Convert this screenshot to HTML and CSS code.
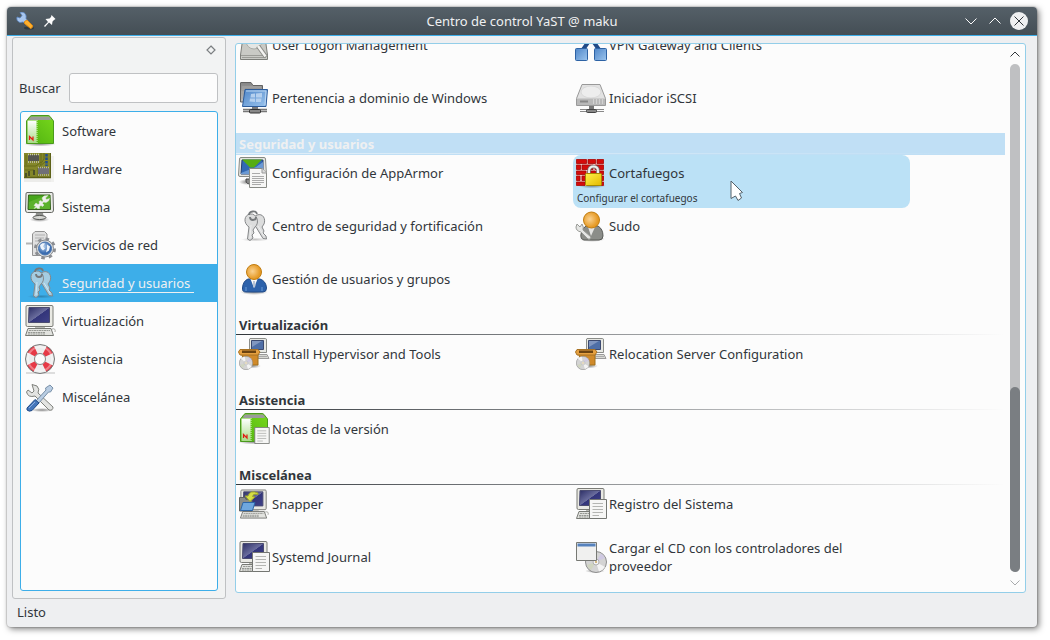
FILE: index.html
```html
<!DOCTYPE html>
<html lang="es">
<head>
<meta charset="utf-8">
<title>Centro de control YaST @ maku</title>
<link rel="stylesheet" href="styles.css">
</head>
<body>
<svg class="defs" aria-hidden="true">
  <defs>
    <linearGradient id="gGreen" x1="0" y1="1" x2="1" y2="0"><stop offset="0" stop-color="#4eb010"/><stop offset="1" stop-color="#78d81c"/></linearGradient>
    <linearGradient id="gPale" x1="0" y1="0" x2="0" y2="1"><stop offset="0" stop-color="#ffffff"/><stop offset="1" stop-color="#a9dc88"/></linearGradient>
    <linearGradient id="gScreen" x1="0" y1="0" x2="1" y2="1"><stop offset="0" stop-color="#2c2e66"/><stop offset=".5" stop-color="#6b6e9e"/><stop offset=".52" stop-color="#33357a"/><stop offset="1" stop-color="#404288"/></linearGradient>
    <linearGradient id="gBlue" x1="0" y1="0" x2="1" y2="1"><stop offset="0" stop-color="#4f86c8"/><stop offset="1" stop-color="#9cc5ee"/></linearGradient>
    <linearGradient id="gFolder" x1="0" y1="0" x2="0" y2="1"><stop offset="0" stop-color="#858585"/><stop offset="1" stop-color="#bebebe"/></linearGradient>
    <linearGradient id="gLock" x1="0" y1="0" x2="1" y2="1"><stop offset="0" stop-color="#fff34a"/><stop offset="1" stop-color="#e3b800"/></linearGradient>
    <radialGradient id="gHead" cx=".4" cy=".45"><stop offset="0" stop-color="#fad291"/><stop offset="1" stop-color="#e69a25"/></radialGradient>
    <radialGradient id="gGlobe" cx=".4" cy=".35"><stop offset="0" stop-color="#b9d2ee"/><stop offset="1" stop-color="#3a6cb0"/></radialGradient>
    <radialGradient id="gShade"><stop offset="0" stop-color="#000" stop-opacity=".45"/><stop offset="1" stop-color="#000" stop-opacity="0"/></radialGradient>

    <symbol id="software" viewBox="0 0 32 32">
      <ellipse cx="16" cy="29" rx="16" ry="2.500" fill="url(#gShade)"/>
      <path d="M2.500 6 6 1.500Q7 .5 8 .5H24Q25 .5 26 1.500L29.500 6V28.500H2.500Z" fill="url(#gGreen)" stroke="#4a9a1c"/>
      <path d="M4.500 4.500 7 1.500H25L27.500 4.500 25 5H7Z" fill="#9b9b9b"/>
      <path d="M3.500 5.500H12.500V28H3.500Z" fill="url(#gPale)"/>
      <path d="M13 5V28" stroke="#d7f2c2" stroke-dasharray="1 1"/>
      <path d="M5.500 25V21.500L9 25V21.500" fill="none" stroke="#e01b12" stroke-width="1.200"/>
    </symbol>
    <symbol id="hardware" viewBox="0 0 32 32">
      <path d="M0 24H30V29H0Z" fill="#ececea"/><path d="M27 3H30V29H27Z" fill="#f1f1ef"/>
      <path d="M0 0H27V25H0Z" fill="#84872a"/>
      <path d="M0 13H12L17 9V0M1 17H10M20 0V6L16 12M2 2V12M14 25V15L22 8" stroke="#666a18" fill="none"/>
      <path d="M4 2H15V8H4Z" fill="#555650"/><path d="M4 1.500H15M4 9H15" stroke="#c9c9b8" stroke-width="1.500" stroke-dasharray="1 1"/>
      <path d="M14 15H25V21H14Z" fill="#706f76"/><path d="M14 14.500H25M14 22H25" stroke="#b5b5a8" stroke-width="1.500" stroke-dasharray="1 1"/>
      <path d="M22.500 1V13" stroke="#1f4e94" stroke-width="2.500" stroke-dasharray="2.500 1"/>
      <path d="M5 18V23M2 20V24M10 17V22" stroke="#4c512a" stroke-width="2"/>
      <path d="M0 24.500H27" stroke="#5d6118" stroke-width="1.500"/><path d="M26.500 0V25" stroke="#5d6118"/>
    </symbol>
    <symbol id="sistema" viewBox="0 0 32 32">
      <ellipse cx="15.500" cy="28.500" rx="10" ry="2.500" fill="url(#gShade)"/>
      <path d="M12 22H19L20 27H11Z" fill="#8f918d"/><ellipse cx="15.500" cy="26.500" rx="6.500" ry="2" fill="#d6d7d3" stroke="#555753"/>
      <path d="M3 1.500H28Q29 1.500 29 3L29.500 19Q29.500 21.500 27.500 21.500H3.500Q1.500 21.500 1.500 19L2 3Q2 1.500 3 1.500Z" fill="#e9eae7" stroke="#666863"/>
      <path d="M4.500 4H26L26.500 18.500H4Z" fill="#46a51a" stroke="#36621d"/>
      <path d="M5 18V11L20 5V4.500H26V18Z" fill="#6fbd3d" opacity=".5"/>
      <path d="M10 17.500 12 15.500 10 14.500 12 12 14 13.500 15.500 12.500 15 10.500 17 9.500 18 11 19 9.500 18 7 20 5 24 4.500 21.500 7 22.500 8.500 25.500 7.500 24.500 10 22 11.500 19.500 11 18.500 12.500 20 14 18.500 15.500 17 14.500 15.500 15.500 15.500 17.500 13.500 17.500 12.500 16.500Z" fill="#eeeeec" stroke="#dfe8da" stroke-width=".500"/>
    </symbol>
    <symbol id="red" viewBox="0 0 32 32">
      <path d="M2 14.500H9" stroke="#b4b4b4" stroke-width="2"/>
      <path d="M8.500 5 11 2.500H20.500L23 5V26.500H8.500Z" fill="#e0e0e0" stroke="#929292"/>
      <path d="M11 6H21M11 9H20M11 12H15" stroke="#b0b0b0"/>
      <circle cx="21" cy="19.500" r="9.500" fill="none" stroke="#8c8e92" stroke-width="3" stroke-dasharray="3.500 4"/>
      <circle cx="21" cy="19.500" r="8.500" fill="#dcdddd" stroke="#85888d"/>
      <circle cx="21" cy="19.500" r="6.500" fill="url(#gGlobe)" stroke="#4a76b0"/>
      <path d="M16 16.500C18 13.500 20 14.500 21 14.500L19 17.500 21 19.500 19 21.500 17 19.500ZM23 15.500 26 17.500 25 21.500 22 23.500 23 19.500Z" fill="#eef4fb"/>
    </symbol>
    <symbol id="llaves" viewBox="0 0 32 32">
      <ellipse cx="17" cy="29.500" rx="14" ry="2" fill="url(#gShade)" opacity=".5"/>
      <g fill="currentColor" stroke="#858789">
        <path d="M19 5C25 3 28 9 26 14L24 17 26 21 25 23 28 26 28.500 29 25 28.500 18 17C14 13 14 7 19 5Z"/>
        <path d="M12 4C6 5 5 13 11 17L9.500 29 12 30.500 15 28 14 25 16 23 15 20 17 17C22 13 19 3 12 4Z"/>
      </g>
      <path d="M11 5C11 1 18 0 19 4M12 7A3 3 0 1 0 18 7" fill="none" stroke="#75797b" stroke-width="1.800"/>
      <path d="M13 15 12 28M20 16 26 26" stroke="#fff" opacity=".5"/>
    </symbol>
    <symbol id="pc" viewBox="0 0 32 32">
      <path d="M3 .5H28Q29 .5 29 2V20Q29 21.500 28 21.500H3.500Q2 21.500 2 20V2Q2 .5 3 .5Z" fill="#e9e9e3" stroke="#7b7c77"/>
      <path d="M5 2.500H25.500V17.500H4.500Z" fill="url(#gScreen)" stroke="#4a4b70"/>
      <path d="M11 22H21V24H11Z" fill="#b8b9b3"/>
      <path d="M4 23.500H27L29.500 30.500H1.500Z" fill="#e2e3df" stroke="#777974"/>
      <path d="M5 25.500H26M4 27.500H21M4 29H21" stroke="#979994" stroke-dasharray="2 .5"/>
      <path d="M28 24Q32 23 31 27" fill="none" stroke="#a5a6a1"/>
    </symbol>
    <symbol id="asistencia" viewBox="0 0 32 32">
      <path d="M2 29H31V31H2Z" fill="#ddd"/>
      <circle cx="16" cy="16" r="10" fill="none" stroke="#ededed" stroke-width="9"/>
      <circle cx="16" cy="16" r="10" fill="none" stroke="#e63946" stroke-width="9" stroke-dasharray="6.500 9.208" stroke-dashoffset="-4.600"/>
      <circle cx="16" cy="16" r="12" fill="none" stroke="#fff" stroke-width="2" opacity=".35"/>
      <circle cx="16" cy="16" r="14.500" fill="none" stroke="#777"/>
      <circle cx="16" cy="16" r="5.500" fill="#fcfcfc" stroke="#868686"/>
    </symbol>
    <symbol id="herramientas" viewBox="0 0 32 32">
      <ellipse cx="18" cy="29" rx="12" ry="2" fill="url(#gShade)"/>
      <path d="M8 3.500 13 5Q16 8 14 12L29 26Q29 30 25 29L11 15Q4 17 2.500 11L4 9 8 12 10 10Z" fill="#e3e4e2" stroke="#7f817c"/>
      <path d="M11 21 22 9 21.500 7 26 4 29 7 26.500 11 24.500 11 14 23Z" fill="#b9cde3" stroke="#7990a8"/>
      <path d="M3 27 11 18.500 15 22 8 29.500Q5 31 3 29Z" fill="#4677bb" stroke="#204a87"/><path d="M5 27 11 21" stroke="#8fb0df"/>
    </symbol>
    <symbol id="doc" viewBox="0 0 18 20">
      <path d="M.5 .5H17.500V19.500H.5Z" fill="#f6f6f5" stroke="#747672"/>
      <path d="M3.500 4.500H14M3.500 7.500H14M3.500 10.500H14M3.500 13.500H14M3.500 16.500H10" stroke="#b4b5b2"/>
    </symbol>
    <symbol id="disco" viewBox="0 0 22 22">
      <circle cx="11" cy="11" r="10.500" fill="#d4d4d4" stroke="#8e8e8e"/>
      <path d="M11 11 3 4A10 10 0 0 1 9 1ZM11 11 20 16A10 10 0 0 1 14 20.500Z" fill="#f4f4f4"/>
      <path d="M11 11 16 2.500A10 10 0 0 1 20 7Z" fill="#cfc9e2"/><path d="M11 11 2 14A10 10 0 0 0 6 19Z" fill="#d0d5c0"/>
      <circle cx="11" cy="11" r="3" fill="#f4f4f4" stroke="#b0b0b0"/><circle cx="11" cy="11" r="1" fill="#c7a45c"/>
    </symbol>
    <symbol id="logon" viewBox="0 0 32 32">
      <path d="M5 8H27L29.500 26V30.500H2.500V26Z" fill="#c9cac5" stroke="#7c7e79"/>
      <path d="M3 26.500H29M4 28.500H28" stroke="#9b9c97"/>
      <circle cx="16" cy="12" r="8" fill="#e4e6e4" stroke="#aaaca8"/><path d="M20 17 28 28" stroke="#8a8c87" stroke-width="4.500"/><path d="M20 17 27.500 27.500" stroke="#f3f3f1" stroke-width="2.500"/>
    </symbol>
    <symbol id="dominio" viewBox="0 0 32 32">
      <path d="M2.500 1Q2.500 .5 3 .5H13L15 3.500H24.500V20H2.500Z" fill="url(#gFolder)" stroke="#626262"/><path d="M4 5H23M4 7H7M3 10H7M3 13H6M3 16H6" stroke="#a9a9a9"/>
      <path d="M7 7.500H29.500L28 24.500H4.500Z" fill="url(#gBlue)" stroke="#2c5c9c"/>
      <path d="M8 9H28L27 23" fill="none" stroke="#bad5f1"/>
      <path d="M13 12 17 11.500V15.500H12.500ZM18 11.500 24 11V15.500H18ZM12 16.500H17V20L11.500 19.500ZM18 16.500H23.500L23 20H18Z" fill="#b5d0ee"/>
      <path d="M5 27.500H29M5 29.500H29" stroke="#777" stroke-width="1.500"/><path d="M14 25H20V28H14Z" fill="#777"/><rect x="11.500" y="27.500" width="11" height="3.500" rx="1" fill="#888" stroke="#333"/>
    </symbol>
    <symbol id="vpn" viewBox="0 0 32 32">
      <path d="M7 22 14 12H18L25 22" fill="none" stroke="#204a87" stroke-width="4"/>
      <rect x=".5" y="19.500" width="12" height="12" rx="1" fill="url(#gBlue)" stroke="#2d62a4"/><rect x="19.500" y="19.500" width="12" height="12" rx="1" fill="url(#gBlue)" stroke="#2d62a4"/>
    </symbol>
    <symbol id="iscsi" viewBox="0 0 32 32">
      <path d="M7 2.500H25L30.500 16.500V23.500H1.500V16.500Z" fill="#e2e2e2" stroke="#999"/><ellipse cx="16" cy="10" rx="10" ry="6" fill="#ededed" stroke="#d9d9d9"/>
      <path d="M2 16.500H30V23H2Z" fill="#b9b9b9"/><path d="M5 19.500H13" stroke="#888" stroke-width="2"/><path d="M18 19.500H28" stroke="#d2d2d2" stroke-width="5" stroke-dasharray="1 2"/>
      <path d="M5 27.500H29M5 29.500H29" stroke="#888"/><path d="M14 24H19V28H14Z" fill="#777"/><rect x="11.500" y="27.500" width="10" height="3" rx="1" fill="#888" stroke="#444"/>
    </symbol>
    <symbol id="apparmor" viewBox="0 0 32 32">
      <ellipse cx="9" cy="25" rx="8" ry="3" fill="url(#gShade)"/><path d="M8 22H13V27Q8 27 8 24Z" fill="#888" stroke="#444"/>
      <path d="M3 .5H26Q27.500 .5 27.500 2L28.500 18Q28.500 19.500 27 19.500H2Q.5 19.500 .5 18L1.500 2Q1.500 .5 3 .5Z" fill="#e2e3df" stroke="#888a85"/>
      <path d="M4 3H25V17H3Z" fill="#3269b4" stroke="#26406f"/><path d="M3 16 18 10 25 5V17H3Z" fill="#6b99d3"/>
      <path d="M4 2.500H24L16 10.500H12Z" fill="#56ad12"/>
      <path d="M11.500 11.500H24L28.500 16V30.500H11.500Z" fill="#f6f6f5" stroke="#888a85"/><path d="M24 11.500V16H28.500" fill="#ddd" stroke="#999"/>
      <path d="M14 16.500H22M14 19.500H26M14 21.500H26M14 23.500H26M14 25.500H26M14 27.500H23" stroke="#aaa"/>
    </symbol>
    <symbol id="cortafuegos" viewBox="0 0 32 32">
      <ellipse cx="17" cy="28.500" rx="14" ry="3" fill="url(#gShade)"/>
      <path d="M1 2H29V29H1Z" fill="#eec4c2"/>
      <g fill="#d40b0b" stroke="#a30808" stroke-width=".800"><path d="M1.500 2.500H11.500V6.500H1.500ZM13 2.500H20.500V6.500H13ZM22 2.500H28.500V6.500H22ZM1.500 8H5.500V12.500H1.500ZM7 8H18V12.500H7ZM20 8H28.500V12.500H20ZM1.500 14H11V17.500H1.500ZM13 14H20.500V17.500H13ZM22 14H28.500V17.500H22ZM1.500 19H5V23.500H1.500ZM7 19H28.500V23.500H7ZM1.500 25H10V28.500H1.500ZM12 25H28.500V28.500H12Z"/></g>
      <path d="M14 17V14Q14 9.500 18.500 9.500T23 14V17" fill="none" stroke="#777" stroke-width="3.500"/><path d="M14 17V14Q14 9.500 18.500 9.500T23 14V17" fill="none" stroke="#eee" stroke-width="2"/>
      <rect x="10.500" y="16.500" width="16" height="12" rx="1" fill="url(#gLock)" stroke="#a48a00"/>
    </symbol>
    <symbol id="usuario" viewBox="0 0 32 32">
      <ellipse cx="16" cy="29" rx="14" ry="3" fill="url(#gShade)"/>
      <path d="M10 16H22Q28 18 28.500 25Q28.500 29 25 29H8Q4 29 4.500 25Q5 18 10 16Z" fill="#2d62ab" stroke="#204a87"/>
      <path d="M12.500 16H19.500L16 25Z" fill="#fafafa"/><path d="M15 18H17L17.500 23 16 25 15 23Z" fill="#b8c4d6"/><path d="M8 24V28M24 24V28" stroke="#6d9dd8"/>
      <circle cx="16" cy="9" r="7.500" fill="url(#gHead)" stroke="#c17d11"/>
    </symbol>
    <symbol id="sudo" viewBox="0 0 32 32">
      <ellipse cx="17" cy="29" rx="13" ry="3" fill="url(#gShade)"/>
      <path d="M11 16H23Q28 19 28 26Q28 30 24 30H9Q5 29 6 24Q7 18 11 16Z" fill="#8b8d89" stroke="#595b57"/><path d="M13 17H20L16 26Z" fill="#e5e5e4"/>
      <circle cx="16.500" cy="10" r="8" fill="url(#gHead)" stroke="#c17d11"/>
      <path d="M2 14 5 17 7 14Q9 17 8 20L16 27Q16 30 13 29L6 22Q1 21 1 17Z" fill="#e5e6e4" stroke="#989a96"/>
    </symbol>
    <symbol id="hipervisor" viewBox="0 0 32 32">
      <path d="M12 .5H27.500Q28.500 .5 28.500 2V14.500H11.500V1Z" fill="#e7e8e3" stroke="#8b8d89"/><path d="M13.500 2.500H25.500V11.500H13.500Z" fill="#4f6fa6" stroke="#3c4a70"/><path d="M14 9 24 3H14Z" fill="#8197c0"/>
      <path d="M20 16.500H29L31 20.500H20Z" fill="#d8d9d4" stroke="#9a9a9a"/><path d="M21 18.500H29" stroke="#aaa"/>
      <ellipse cx="14" cy="28" rx="9" ry="2.500" fill="url(#gShade)"/>
      <path d="M3 15H20V27H8Z" fill="#d08a2a" stroke="#a0701c"/><path d="M2 11.500H20L22 14 20 17H2L.5 14Z" fill="#e5a040" stroke="#a87222"/><path d="M4 12.500H18V15H4Z" fill="#6b4310"/>
      <use href="#disco" x="1" y="18" width="14" height="14"/>
    </symbol>
    <symbol id="snapper" viewBox="0 0 32 32">
      <use href="#pc" x="1" y="1" width="30" height="31"/>
      <path d="M1.500 9.500H7L8 11.500H14V23H1.500Z" fill="#8a8c89" stroke="#626461"/><path d="M5 14.500H17L14.500 22.500H2.500Z" fill="#6fa7df" stroke="#2d66a8"/>
      <path d="M20 5Q12 1.500 10 8L7 8 12 13.500 17 9 14.500 8.500Q15 5.500 20 6.500Z" fill="#d5dd45" stroke="#9aa12c"/>
    </symbol>
    <symbol id="cdwin" viewBox="0 0 32 32">
      <ellipse cx="20" cy="30" rx="10" ry="2" fill="url(#gShade)"/><use href="#disco" x="10" y="10" width="22" height="22"/>
      <path d="M1.500 1.500H21.500V19.500H1.500Z" fill="#f0f0ef" stroke="#777974"/><path d="M2.500 4H20.500" stroke="#5682bd" stroke-width="3"/>
    </symbol>
  </defs>
</svg>

<div class="window">
  <header class="titlebar">
    <div class="tools">
      <svg class="app-icon" viewBox="0 0 18 18" aria-hidden="true">
        <ellipse cx="13" cy="16" rx="5" ry="1.500" fill="#303a40"/>
        <path d="M4 .5 6 3.500 4 6 1 5Q0 9 4 10.500L7 10 10 12 12 9 10 6.500Q11 1 6 0Z" fill="#a8c6ef" stroke="#5c86c2" stroke-width=".800"/>
        <path d="M8.500 9.500 11 8 16.500 13.500Q17 16 14.500 16.500L8.500 11.500Z" fill="#ffb02e" stroke="#e08a10"/>
      </svg>
      <button class="tool" aria-label="Fijar">
        <svg width="12" height="12" viewBox="0 0 12 12"><path d="M7.500 0 11.500 4 10 5 8.500 6.500 8 10 5 7.500 1 12 0 11 4 7 1.500 4 5.500 3.500 7 2Z" fill="#fcfcfc"/></svg>
      </button>
    </div>
    <h1>Centro de control YaST @ maku</h1>
    <div class="controls">
      <button class="tool" aria-label="Minimizar"><svg width="18" height="18" viewBox="0 0 18 18"><path d="M3.500 6.500 9 12 14.500 6.500" class="line"/></svg></button>
      <button class="tool" aria-label="Maximizar"><svg width="18" height="18" viewBox="0 0 18 18"><path d="M3.500 11.500 9 6 14.500 11.500" class="line"/></svg></button>
      <button class="tool" aria-label="Cerrar"><svg width="18" height="18" viewBox="0 0 18 18"><circle cx="9" cy="9" r="9" fill="#eff0f1"/><path d="M4.500 4.500 13.500 13.500M13.500 4.500 4.500 13.500" class="cross"/></svg></button>
    </div>
  </header>

  <div class="body">
    <aside class="dock">
      <div class="dock-head">
        <button class="tool" aria-label="Separar panel"><svg width="10" height="10" viewBox="0 0 10 10"><path d="M5 1 9 5 5 9 1 5Z" fill="none" stroke="#7b7e81" stroke-width="1.200"/></svg></button>
      </div>
      <div class="search">
        <label for="buscar">Buscar</label>
        <input id="buscar" type="text">
      </div>
      <nav class="groups">
        <a href="#g-software"><svg class="icon"><use href="#software"/></svg><span>Software</span></a>
        <a href="#g-hardware"><svg class="icon"><use href="#hardware"/></svg><span>Hardware</span></a>
        <a href="#g-sistema"><svg class="icon"><use href="#sistema"/></svg><span>Sistema</span></a>
        <a href="#g-red"><svg class="icon"><use href="#red"/></svg><span>Servicios de red</span></a>
        <a href="#g-seguridad" class="current" aria-current="true"><svg class="icon"><use href="#llaves"/></svg><span>Seguridad y usuarios</span></a>
        <a href="#g-virtualizacion"><svg class="icon"><use href="#pc"/></svg><span>Virtualización</span></a>
        <a href="#g-asistencia"><svg class="icon"><use href="#asistencia"/></svg><span>Asistencia</span></a>
        <a href="#g-miscelanea"><svg class="icon"><use href="#herramientas"/></svg><span>Miscelánea</span></a>
      </nav>
    </aside>

    <main class="view">
      <div class="modules">
        <section id="g-red">
          <div class="grid">
            <a class="item" href="#logon-m"><svg class="icon"><use href="#logon"/></svg><span>User Logon Management</span></a>
            <a class="item" href="#vpn-m"><svg class="icon"><use href="#vpn"/></svg><span>VPN Gateway and Clients</span></a>
            <a class="item" href="#dominio-m"><svg class="icon"><use href="#dominio"/></svg><span>Pertenencia a dominio de Windows</span></a>
            <a class="item" href="#iscsi-m"><svg class="icon"><use href="#iscsi"/></svg><span>Iniciador iSCSI</span></a>
          </div>
        </section>
        <section id="g-seguridad">
          <h2 class="active">Seguridad y usuarios</h2>
          <div class="grid">
            <a class="item" href="#apparmor-m"><svg class="icon"><use href="#apparmor"/></svg><span>Configuración de AppArmor</span></a>
            <a class="item hover" href="#cortafuegos-m"><svg class="icon"><use href="#cortafuegos"/></svg><span>Cortafuegos</span><small>Configurar el cortafuegos</small>
              <svg class="pointer" viewBox="0 0 14 22" aria-hidden="true"><path d="M1 1 12.500 12.500 9.500 13.500 11.500 18 8 20.500 5.500 16 1 18.500Z" fill="#fff" stroke="#53616b"/></svg></a>
            <a class="item" href="#centro-m"><svg class="icon"><use href="#llaves"/></svg><span>Centro de seguridad y fortificación</span></a>
            <a class="item" href="#sudo-m"><svg class="icon"><use href="#sudo"/></svg><span>Sudo</span></a>
            <a class="item" href="#usuarios-m"><svg class="icon"><use href="#usuario"/></svg><span>Gestión de usuarios y grupos</span></a>
          </div>
        </section>
        <section id="g-virtualizacion">
          <h2>Virtualización</h2>
          <div class="grid">
            <a class="item" href="#install-m"><svg class="icon"><use href="#hipervisor"/></svg><span>Install Hypervisor and Tools</span></a>
            <a class="item" href="#reloc-m"><svg class="icon"><use href="#hipervisor"/></svg><span>Relocation Server Configuration</span></a>
          </div>
        </section>
        <section id="g-asistencia">
          <h2>Asistencia</h2>
          <div class="grid">
            <a class="item" href="#notas-m"><svg class="icon" viewBox="0 0 32 32"><use href="#software" width="32" height="32"/><use href="#doc" x="16" y="14" width="16" height="17"/></svg><span>Notas de la versión</span></a>
          </div>
        </section>
        <section id="g-miscelanea">
          <h2>Miscelánea</h2>
          <div class="grid">
            <a class="item" href="#snapper-m"><svg class="icon"><use href="#snapper"/></svg><span>Snapper</span></a>
            <a class="item" href="#registro-m"><svg class="icon" viewBox="0 0 32 32"><use href="#pc" width="32" height="32"/><use href="#doc" x="14" y="11" width="18" height="20"/></svg><span>Registro del Sistema</span></a>
            <a class="item" href="#journal-m"><svg class="icon" viewBox="0 0 32 32"><use href="#pc" width="32" height="32"/><use href="#doc" x="14" y="11" width="18" height="20"/></svg><span>Systemd Journal</span></a>
            <a class="item" href="#cd-m"><svg class="icon"><use href="#cdwin"/></svg><span>Cargar el CD con los controladores del proveedor</span></a>
          </div>
        </section>
      </div>
      <div class="scrollbar">
        <button class="tool" aria-label="Subir"><svg width="12" height="20" viewBox="0 0 12 20"><path d="M1.500 12.500 6 8 10.500 12.500" fill="none" stroke="#31363b"/></svg></button>
        <div class="track"><div class="thumb"></div></div>
        <button class="tool" aria-label="Bajar"><svg width="12" height="20" viewBox="0 0 12 20"><path d="M1.500 8.500 6 13 10.500 8.500" fill="none" stroke="#a9abad"/></svg></button>
      </div>
    </main>
  </div>

  <footer class="status">Listo</footer>
</div>
</body>
</html>
```

FILE: styles.css
```css
* { box-sizing: border-box; }

body {
  margin: 0;
  height: 100vh;
  padding: 7px 13px 13px 7px;
  background: #fff;
  color: #31363b;
  font: 13px/18px "Noto Sans", sans-serif;
}

a { color: inherit; text-decoration: none; }

.defs { position: absolute; width: 0; height: 0; }

.icon { display: block; width: 32px; height: 32px; flex: none; color: #dcdddd; }

.tool {
  display: flex;
  padding: 0;
  border: 0;
  background: none;
}

.window {
  display: flex;
  flex-direction: column;
  height: 100%;
  border-radius: 4px;
  background: #eeeff1;
  box-shadow: 0 0 1px 1px rgba(0, 0, 0, .13), 2px 2px 6px rgba(0, 0, 0, .5);
}

.titlebar {
  display: grid;
  grid-template-columns: 1fr auto 1fr;
  align-items: center;
  height: 29px;
  padding: 0 9px;
  border-bottom: 1px solid #3daee9;
  border-radius: 4px 4px 0 0;
  background: linear-gradient(#556068, #444e55);
  color: #eff0f1;
}

.titlebar h1 { margin: 0; font-size: 13px; font-weight: 400; }
.tools, .controls { display: flex; align-items: center; }
.tools { gap: 10px; }
.controls { justify-content: flex-end; gap: 6px; }
.app-icon { width: 18px; height: 18px; }
.line { fill: none; stroke: #fcfcfc; }
.cross { stroke: #31363b; }

.body {
  display: flex;
  flex: 1;
  gap: 9px;
  min-height: 0;
  padding: 1px 11px 0 5px;
}

.dock {
  display: flex;
  flex-direction: column;
  width: 214px;
  flex: none;
  padding: 0 7px 7px;
  border: 1px solid #bfc1c3;
  border-radius: 3px;
  background: #f2f3f3;
}

.dock-head { display: flex; justify-content: flex-end; padding: 7px 2px 18px; }

.search { display: flex; align-items: center; gap: 8px; margin-left: -1px; }

.search input {
  flex: 1;
  min-width: 0;
  height: 30px;
  padding: 0 6px;
  border: 1px solid #bfc1c3;
  border-radius: 3px;
  background: #fcfcfc;
  font: inherit;
}

.groups {
  flex: 1;
  margin-top: 8px;
  border: 1px solid #3daee9;
  border-radius: 3px;
  background: #fcfcfc;
}

.groups a {
  display: flex;
  align-items: center;
  gap: 3px;
  height: 38px;
  padding: 0 3px;
}

.groups span { padding: 1px 4px 0 3px; border-bottom: 1px solid transparent; }
.groups .current { background: #3daee9; color: #eff0f1; }
.groups .current .icon { color: #a4cde2; }
.groups .current span { padding-top: 2px; border-color: #eff0f1; line-height: 17px; }

.view {
  display: flex;
  flex: 1;
  min-width: 0;
  margin: 6px 0;
  border: 1px solid #93cee9;
  border-radius: 3px;
  background: #fcfcfc;
}

/* The list is scrolled to its end */
.modules {
  display: flex;
  flex: 1;
  flex-direction: column;
  justify-content: flex-end;
  overflow: hidden;
}

.modules h2 {
  height: 22px;
  margin: 0;
  padding: 2px 3px;
  background: linear-gradient(90deg, #31363b, transparent) 0 20px / 100% 1px no-repeat;
  font-size: 13px;
  font-weight: 700;
}

.modules h2.active {
  background: linear-gradient(90deg, #e2eff8, transparent) 0 20px / 100% 1px no-repeat #c0dff5;
  color: #eff0f1;
}

.grid { display: grid; grid-template-columns: repeat(auto-fill, 337px); }

.item {
  position: relative;
  display: grid;
  grid-template-columns: 32px 1fr;
  grid-template-rows: 32px 17px;
  column-gap: 2px;
  align-items: center;
  height: 53px;
  padding: 2px;
  border-radius: 8px;
}

.item small { grid-column: 1 / -1; padding: 2px 2px 0; font-size: 10px; line-height: 15px; }
.item.hover { background: #bbe1f6; }

.pointer { position: absolute; left: 157px; top: 25px; width: 14px; height: 22px; }

.scrollbar {
  display: flex;
  flex-direction: column;
  align-items: center;
  width: 20px;
  flex: none;
}

.track {
  display: flex;
  flex: 1;
  flex-direction: column;
  justify-content: flex-end;
  width: 10px;
  border-radius: 5px;
  background: #bfc0c2;
}

.thumb { height: calc(100% * 185 / 508); border-radius: 5px; background: #7a7e82; }

.status { padding: 5px 10px 6px; line-height: 17px; }
```
